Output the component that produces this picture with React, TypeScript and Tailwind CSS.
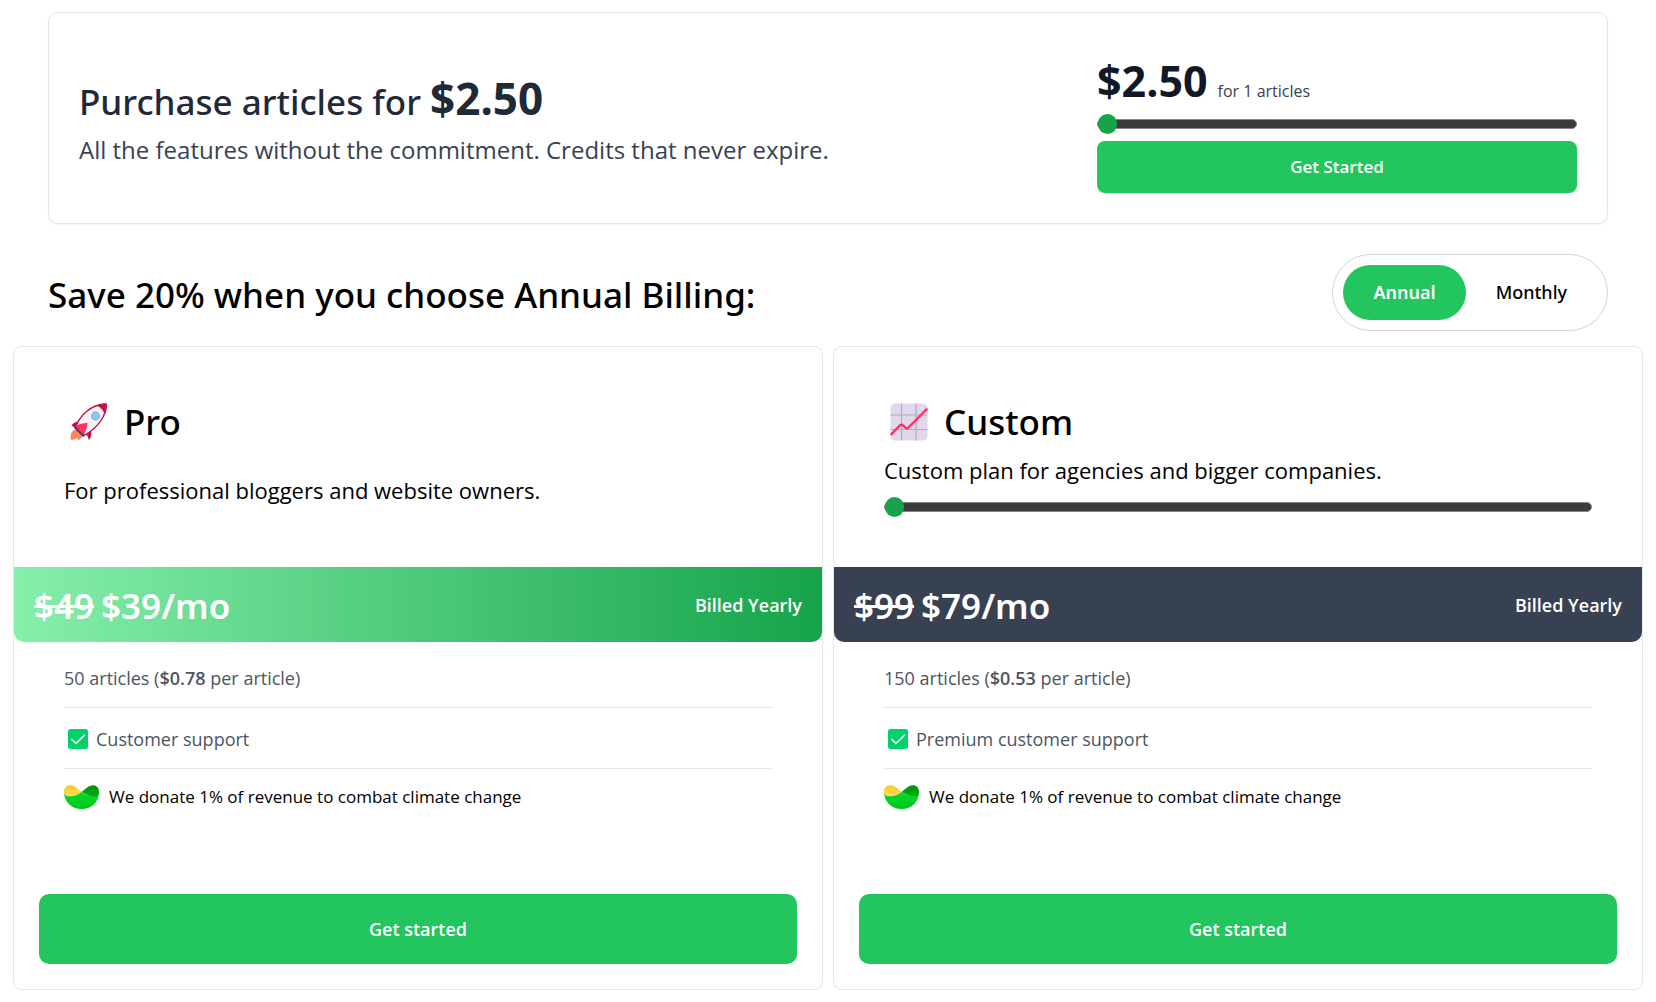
import { useState } from 'react';
import type { ReactNode } from 'react';

function RocketIcon() {
  return (
    <svg viewBox="0 0 38 38" className="h-[38px] w-[38px]" aria-hidden="true">
      <path d="M7 26C2 27 .5 30 .6 36.5 4 37.2 6 36.5 7 34.5c.6 2 1 2.500 1.600 2.500C11 36 12.500 34 13 31z" fill="#ff8657" />
      <path d="M10.500 18.500C7 18 3.500 19.500 1.500 22.500c1 .5 2.500 1.500 4 3.500L12 27l5 5.500c1 1 1.500 3 1.500 4.500 2.500-1.500 3.500-6 2.500-9z" fill="#c90d49" />
      <path d="M6 23C10 13 20 1.500 36 1c1 12-9 24-21 31z" fill="#f3f3f3" stroke="#c90d49" strokeWidth="1.300" />
      <path d="M27 2.800C30 1.400 33 .5 36.500.6 37.500 4 36.500 8 34.800 11.500 33.500 7.500 31 4.500 27 2.800z" fill="#c90d49" />
      <path d="M5.500 23.500l9.500 9-2 1.500-8.500-8.500z" fill="#533566" />
      <path d="M5.500 23c3.500-2 7.500-2.800 12-3.200-.4 4.700-1.500 9.200-4 11.700z" fill="#fe3061" />
      <circle cx="25.500" cy="13" r="4.400" fill="#9b9b9f" />
      <circle cx="25.500" cy="13" r="3.400" fill="#83cbff" />
    </svg>
  );
}

function ChartIcon() {
  return (
    <svg viewBox="0 0 38 38" className="h-[38px] w-[38px]" aria-hidden="true">
      <rect x=".5" y=".5" width="37" height="37" rx="4.500" fill="#e1d8ec" />
      <path d="M11.500.5v37M26 .5v37M.5 12h37M.5 26.500h37" stroke="#b4acbc" strokeWidth="1.200" fill="none" />
      <path d="M.8 32L9.800 22.500Q11.500 20.800 13.200 22.500L15.500 24.600Q17 26 18.500 24.500L37.300 5.500" stroke="#fe3061" strokeWidth="2.400" fill="none" />
    </svg>
  );
}

function CheckIcon() {
  return (
    <svg viewBox="0 0 20 20" className="h-5 w-5 shrink-0" aria-hidden="true">
      <rect width="20" height="20" rx="2.500" fill="#00d26a" />
      <path d="M3.800 10.300l4.200 4.200 8.500-8.300" stroke="#f4f4f4" strokeWidth="1.700" strokeLinecap="round" strokeLinejoin="round" fill="none" />
    </svg>
  );
}

function ClimateIcon({ id }: { id: string }) {
  return (
    <svg viewBox="0 0 105 72" className="h-6 w-[35px] shrink-0" aria-hidden="true">
      <defs>
        <linearGradient id={`${id}-body`} x1="0" y1="0" x2="0" y2="1">
          <stop offset="0" stopColor="#00e028" />
          <stop offset="1" stopColor="#00c31a" />
        </linearGradient>
        <linearGradient id={`${id}-sun`} x1="0" y1="0" x2="0" y2="1">
          <stop offset="0" stopColor="#ffc91d" />
          <stop offset="1" stopColor="#ffdc63" />
        </linearGradient>
        <linearGradient id={`${id}-leaf`} x1="0" y1="0" x2="0" y2="1">
          <stop offset="0" stopColor="#009600" />
          <stop offset="1" stopColor="#00a81a" />
        </linearGradient>
      </defs>
      <path d="M0 20C12 36 36 34 53 20c18 14 40 16 52 0 0 30-22 52-52 52S0 50 0 20z" fill={`url(#${id}-body)`} />
      <path d="M0 20C0 8 8 .5 19 .5 34 .5 41 13 53 20 42 29 33 34 20 34 9 34 0 31 0 20z" fill={`url(#${id}-sun)`} />
      <path d="M105 20C105 7 97 .5 87 .5 73 .5 66 12 53 20c12 8 25 14 38 14 10 0 14-4 14-14z" fill={`url(#${id}-leaf)`} />
    </svg>
  );
}

function Slider({ label, min, max, value, onChange }: { label: string; min: number; max: number; value: number; onChange: (v: number) => void }) {
  return (
    <input
      type="range"
      aria-label={label}
      min={min}
      max={max}
      value={value}
      onChange={(e) => onChange(Number(e.target.value))}
      className="block h-5 w-full cursor-pointer appearance-none bg-transparent [&::-webkit-slider-runnable-track]:h-[10px] [&::-webkit-slider-runnable-track]:rounded-full [&::-webkit-slider-runnable-track]:border [&::-webkit-slider-runnable-track]:border-[#858585] [&::-webkit-slider-runnable-track]:bg-[#3b3b3b] [&::-webkit-slider-thumb]:-mt-[6px] [&::-webkit-slider-thumb]:h-5 [&::-webkit-slider-thumb]:w-[19px] [&::-webkit-slider-thumb]:appearance-none [&::-webkit-slider-thumb]:rounded-full [&::-webkit-slider-thumb]:bg-[#16a34a]"
    />
  );
}

type PlanProps = {
  id: string;
  icon: ReactNode;
  name: string;
  intro: ReactNode;
  band: string;
  oldPrice: string;
  price: string;
  billed: string;
  articles: number;
  perArticle: string;
  support: string;
};

function PlanCard({ id, icon, name, intro, band, oldPrice, price, billed, articles, perArticle, support }: PlanProps) {
  return (
    <section className="flex flex-col rounded-lg border border-[#e5e7eb]">
      <header className="min-h-[220px] px-[50px] pt-[51px]">
        <h3 className="flex items-center gap-4 pl-[6px] font-['Noto_Sans',sans-serif] text-[35px] leading-[48px] font-medium">
          {icon}
          {name}
        </h3>
        {intro}
      </header>
      <div className={`flex h-[75px] items-center justify-between rounded-b-[10px] px-5 font-semibold text-white ${band}`}>
        <p className="flex gap-[7px] pt-[3px] font-['Noto_Sans',sans-serif] text-[35px] leading-[48px]">
          <s>{oldPrice}</s>
          <span>{price}/mo</span>
        </p>
        <p className="text-[18px] leading-7">{billed}</p>
      </div>
      <ul className="px-[50px] pt-[5px] text-[18px] leading-7 text-[#4b5563]">
        <li className="border-b border-[#e5e7eb] pt-[17px] pb-[15px]">
          {articles} articles (<strong className="font-semibold">{perArticle}</strong> per article)
        </li>
        <li className="flex items-center gap-2 border-b border-[#e5e7eb] pt-[17px] pb-[15px] pl-1">
          <CheckIcon />
          {support}
        </li>
        <li className="flex items-center gap-[10px] py-[14px] text-[17px] text-black">
          <ClimateIcon id={id} />
          We donate 1% of revenue to combat climate change
        </li>
      </ul>
      <button className="mx-[25px] mt-[69px] mb-[25px] h-[70px] rounded-[10px] bg-[#22c55e] text-[18px] font-semibold text-white">
        Get started
      </button>
    </section>
  );
}

export default function App() {
  const [articles, setArticles] = useState(1);
  const [volume, setVolume] = useState(150);
  const [annual, setAnnual] = useState(true);
  const total = `$${(articles * 2.5).toFixed(2)}`;
  const billed = annual ? 'Billed Yearly' : 'Billed Monthly';
  const tab = "h-[55px] rounded-full px-[30px] font-['Noto_Sans',sans-serif] text-[18px]";

  return (
    <main className="bg-white px-[13px] pt-3 pb-3 font-['Open_Sans','Noto_Sans',sans-serif] text-black">
      <section className="mx-[35px] flex items-center justify-between gap-8 rounded-[10px] border border-[#e5e7eb] p-[30px] shadow-[0_1px_2px_rgba(0,0,0,0.05)]">
        <div>
          <h1 className="font-['Noto_Sans',sans-serif] text-[35px] leading-[56px] font-medium text-[#1f2937]">
            Purchase articles for <strong className="text-[44px] font-bold">{total}</strong>
          </h1>
          <p className="mt-1 text-[24px] leading-8 text-[#374151]">
            All the features without the commitment. Credits that never expire.
          </p>
        </div>
        <div className="w-[480px]">
          <p className="flex items-baseline gap-[10px] pt-2 pb-[3px] text-[#374151]">
            <strong className="text-[43px] leading-[60px] font-bold text-[#111827]">{total}</strong>
            <span className="text-[16px]">for {articles} articles</span>
          </p>
          <Slider label="Number of articles" min={1} max={100} value={articles} onChange={setArticles} />
          <button className="mt-[7px] h-[52px] w-full rounded-lg bg-[#22c55e] text-[17px] font-semibold text-white">
            Get Started
          </button>
        </div>
      </section>

      <div className="mx-[35px] mt-[30px] flex items-center justify-between">
        <h2 className="pt-1 font-['Noto_Sans',sans-serif] text-[35px] leading-[48px] font-medium">
          Save 20% when you choose Annual Billing:
        </h2>
        <div className="flex rounded-full border border-[#d1d5db] p-[10px]">
          <button aria-pressed={annual} onClick={() => setAnnual(true)} className={`${tab} ${annual ? 'bg-[#22c55e] font-semibold text-white' : 'font-medium'}`}>
            Annual
          </button>
          <button aria-pressed={!annual} onClick={() => setAnnual(false)} className={`${tab} ${annual ? 'font-medium' : 'bg-[#22c55e] font-semibold text-white'}`}>
            Monthly
          </button>
        </div>
      </div>

      <div className="mt-[15px] grid grid-cols-2 gap-[10px]">
        <PlanCard
          id="pro"
          icon={<RocketIcon />}
          name="Pro"
          intro={<p className="mt-[26px] text-[22px] leading-9">For professional bloggers and website owners.</p>}
          band="bg-linear-to-r/srgb from-[#86efac] to-[#16a34a]"
          oldPrice="$49"
          price={annual ? '$39' : '$49'}
          billed={billed}
          articles={50}
          perArticle="$0.78"
          support="Customer support"
        />
        <PlanCard
          id="custom"
          icon={<ChartIcon />}
          name="Custom"
          intro={
            <>
              <p className="mt-[6px] mb-[9px] text-[22px] leading-9">Custom plan for agencies and bigger companies.</p>
              <Slider label="Articles per month" min={150} max={1000} value={volume} onChange={setVolume} />
            </>
          }
          band="bg-[#374151]"
          oldPrice="$99"
          price={annual ? '$79' : '$99'}
          billed={billed}
          articles={volume}
          perArticle="$0.53"
          support="Premium customer support"
        />
      </div>
    </main>
  );
}
